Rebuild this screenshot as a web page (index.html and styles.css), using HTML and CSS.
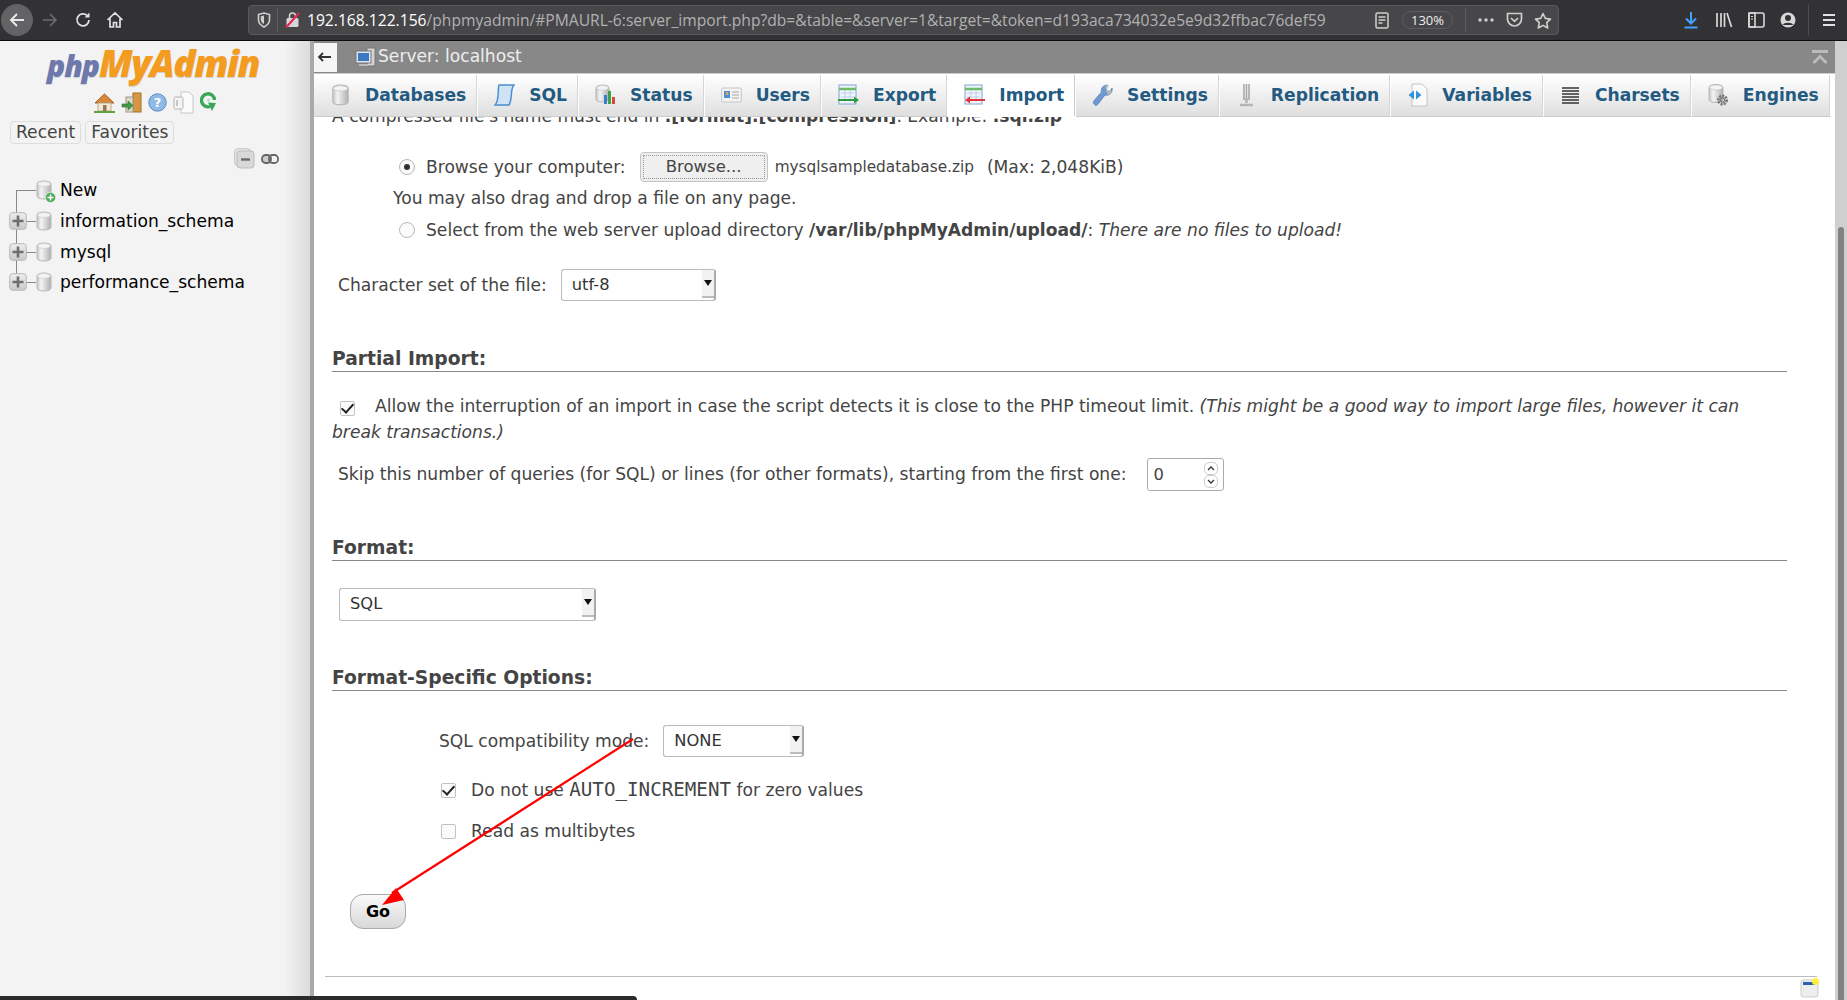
FILE: index.html
```html
<!DOCTYPE html>
<html lang="en">
<head>
<meta charset="UTF-8">
<title>phpMyAdmin - Import</title>
<link rel="stylesheet" href="styles.css">
</head>
<body>
<svg class="defs" width="0" height="0">
  <defs>
    <linearGradient id="cyl" x1="0" x2="1" y1="0" y2="0">
      <stop offset="0" stop-color="#c4c4c4"/><stop offset=".3" stop-color="#f4f4f4"/><stop offset="1" stop-color="#b0b0b0"/>
    </linearGradient>
    <linearGradient id="btn" x1="0" x2="0" y1="0" y2="1">
      <stop offset="0" stop-color="#eee"/><stop offset="1" stop-color="#c9c9c9"/>
    </linearGradient>
    <symbol id="db" viewBox="0 0 16 20">
      <path d="M1 4c0-4 14-4 14 0v12c0 4-14 4-14 0z" fill="url(#cyl)" stroke="#b8b8b8"/>
      <ellipse cx="8" cy="4" rx="6.4" ry="2.4" fill="#f4f4f4" stroke="#cacaca" stroke-width=".7"/>
    </symbol>
    <symbol id="plus" viewBox="0 0 18 18">
      <rect x=".7" y=".7" width="16.6" height="16.6" rx="3" fill="url(#btn)" stroke="#b8b8b8"/>
      <path d="M9 3.500v11M3.500 9h11" stroke="#6e6e6e" stroke-width="2.600"/>
    </symbol>
  </defs>
</svg>

<header class="browser-bar">
  <span class="nav-back">
    <svg width="18" height="18" viewBox="0 0 18 18"><path d="M16 9H3M9 3 3 9l6 6" fill="none" stroke="#e8e8e8" stroke-width="2"/></svg>
  </span>
  <svg class="ico-forward" width="18" height="18" viewBox="0 0 18 18"><path d="M2 9h13M9 3l6 6-6 6" fill="none" stroke="#6d6d6f" stroke-width="1.6"/></svg>
  <svg class="ico-reload" width="18" height="18" viewBox="0 0 18 18"><path d="M15 9a6 6 0 1 1-2-4.6" fill="none" stroke="#e2e2e2" stroke-width="1.8"/><path d="M15.5 1.5v5h-5z" fill="#e2e2e2"/></svg>
  <svg class="ico-home" width="18" height="18" viewBox="0 0 18 18"><path d="M1.5 9 9 2l7.5 7M4 7.5V16h3.5v-4.5h3V16H14V7.500" fill="none" stroke="#e2e2e2" stroke-width="1.7"/></svg>
  <div class="urlbar">
    <svg class="ico-shield" width="14" height="16" viewBox="0 0 14 16"><path d="M1.500 2.500 7 1l5.500 1.500V8c0 3-2.500 5.500-5.500 7C4 13.500 1.500 11 1.500 8z" fill="none" stroke="#cfcfcf" stroke-width="1.600"/><path d="M7 3.500v8.500C5 11 3.800 9.500 3.800 7.500V4.300z" fill="#cfcfcf"/></svg>
    <span class="url-sep"></span>
    <svg class="ico-lock" width="15" height="16" viewBox="0 0 15 16"><rect x="1.500" y="6" width="12" height="9" rx="1.500" fill="#d7d7d7"/><path d="M4.500 6V4a3 3 0 0 1 6 0v2" fill="none" stroke="#d7d7d7" stroke-width="1.500"/><path d="M1 15.500 14 1" stroke="#e22850" stroke-width="2.200"/></svg>
    <div class="url-text"><span class="url-host">192.168.122.156</span>/phpmyadmin/#PMAURL-6:server_import.php?db=&amp;table=&amp;server=1&amp;target=&amp;token=d193aca734032e5e9d32ffbac76def59</div>
    <svg class="ico-reader" width="14" height="17" viewBox="0 0 14 17"><rect x="1" y="1" width="12" height="15" rx="1.500" fill="none" stroke="#cfcfcf" stroke-width="1.500"/><path d="M3.500 5h7M3.500 8h7M3.500 11h4" stroke="#cfcfcf" stroke-width="1.300"/></svg>
    <span class="zoom-pill">130%</span>
    <span class="url-sep url-sep-right"></span>
    <svg class="ico-dots" width="16" height="4" viewBox="0 0 16 4"><circle cx="2" cy="2" r="1.700" fill="#cfcfcf"/><circle cx="8" cy="2" r="1.700" fill="#cfcfcf"/><circle cx="14" cy="2" r="1.700" fill="#cfcfcf"/></svg>
    <svg class="ico-pocket" width="17" height="16" viewBox="0 0 17 16"><path d="M1.500 1.500h14V7a7 7 0 0 1-14 0z" fill="none" stroke="#cfcfcf" stroke-width="1.700"/><path d="m5 6 3.500 3.300L12 6" fill="none" stroke="#cfcfcf" stroke-width="1.700"/></svg>
    <svg class="ico-star" width="18" height="17" viewBox="0 0 18 17"><path d="m9 1.500 2.300 4.900 5.200.7-3.800 3.600 1 5.300L9 13.400 4.300 16l1-5.300L1.500 7.100l5.200-.7z" fill="none" stroke="#cfcfcf" stroke-width="1.600" stroke-linejoin="round"/></svg>
  </div>
  <div class="browser-tools">
    <svg width="16" height="18" viewBox="0 0 16 18"><path d="M8 1v11M3 7.500 8 12.500l5-5" fill="none" stroke="#45a1ff" stroke-width="2"/><path d="M1.500 16.500h13" stroke="#45a1ff" stroke-width="2"/></svg>
    <svg class="tool-library" width="18" height="16" viewBox="0 0 18 16"><path d="M2 1v14M6 1v14M9.500 1v14M12 1l4.500 14" stroke="#d8d8d8" stroke-width="1.700" fill="none"/></svg>
    <svg width="17" height="16" viewBox="0 0 17 16"><rect x="1" y="1" width="15" height="14" rx="2" fill="none" stroke="#d8d8d8" stroke-width="1.600"/><rect x="1" y="1" width="6" height="14" fill="none" stroke="#d8d8d8" stroke-width="1.600"/><path d="M3 4.500h2M3 7h2" stroke="#d8d8d8" stroke-width="1.200"/></svg>
    <svg width="16" height="16" viewBox="0 0 16 16"><circle cx="8" cy="8" r="7.500" fill="#d8d8d8"/><circle cx="8" cy="6" r="3" fill="#323234"/><path d="M2.800 13c1-3 9.400-3 10.400 0z" fill="#323234"/></svg>
    <span class="tools-sep"></span>
    <svg width="14" height="14" viewBox="0 0 14 14"><path d="M1 2h12M1 7h12M1 12h12" stroke="#e2e2e2" stroke-width="2"/></svg>
  </div>
</header>

<div class="app">
  <aside class="sidebar">
    <div class="logo"><span class="logo-php">php</span><span class="logo-my">MyAdmin</span></div>
    <div class="nav-icons">
      <svg width="21" height="21" viewBox="0 0 21 21"><path d="M1 11 10.500 2 20 11z" fill="#d9893b" stroke="#a85f1f"/><rect x="4" y="11" width="13" height="8" fill="#f3e9d2" stroke="#b9a98a"/><rect x="9" y="13" width="3.500" height="6" fill="#8f7a55"/><path d="M0 20h21" stroke="#5fa340" stroke-width="2"/></svg>
      <svg width="21" height="21" viewBox="0 0 21 21"><rect x="12" y="1" width="8" height="19" fill="#d9953f" stroke="#a5702a"/><rect x="5" y="5" width="7" height="15" fill="#d9d9c9" stroke="#9a9a8a"/><path d="M1 12h6V9l5 4.500L7 18v-3H1z" fill="#3f9a46" stroke="#2b6d31" stroke-width=".6"/></svg>
      <svg width="19" height="21" viewBox="0 0 19 21"><circle cx="9.500" cy="10.500" r="8.700" fill="#8fb9e6" stroke="#5d8ac0"/><text class="help-q" x="9.500" y="15">?</text></svg>
      <svg width="21" height="23" viewBox="0 0 21 23"><path d="M8 1h8l4 4v17H8z" fill="#fbfbfb" stroke="#c8c8c8"/><rect x="1" y="6" width="9" height="12" rx="1.500" fill="#f4f4f4" stroke="#b5b5b5"/><path d="M4 9v6" stroke="#bbb" stroke-width="1.500"/></svg>
      <svg width="17" height="21" viewBox="0 0 17 21"><path d="M14.500 8A6.500 6.500 0 1 0 10 14.500" fill="none" stroke="#3aa65a" stroke-width="3.400"/><path d="M8 10.500l8 .5-4 8z" fill="#3aa65a"/><circle cx="8.500" cy="8" r="1.500" fill="#a8dcae"/></svg>
    </div>
    <div class="nav-tabs">
      <span class="nav-tab">Recent</span>
      <span class="nav-tab">Favorites</span>
    </div>
    <div class="nav-tools">
      <svg width="21" height="21" viewBox="0 0 21 21"><rect x=".7" y=".7" width="16" height="17" rx="3" fill="#e4e4e4" stroke="#c5c5c5"/><rect x="3" y="3" width="17" height="17" rx="3" fill="#d8d8d8" stroke="#bdbdbd"/><path d="M7 11.500h9" stroke="#6a6a6a" stroke-width="2.400"/></svg>
      <svg width="18" height="10" viewBox="0 0 18 10"><rect x="1" y="1" width="9" height="8" rx="3.500" fill="#ccc" stroke="#666" stroke-width="1.800"/><rect x="8" y="1" width="9" height="8" rx="3.500" fill="none" stroke="#666" stroke-width="1.800"/></svg>
    </div>
    <ul class="tree">
      <li class="tree-row tree-first">
        <span class="tree-exp"></span>
        <span class="tree-db tree-db-new"><svg width="16" height="20"><use href="#db"/></svg><svg class="new-dot" width="11" height="11" viewBox="0 0 11 11"><circle cx="5.500" cy="5.500" r="5" fill="#4ba858" stroke="#d9f0dc" stroke-width=".8"/><path d="M5.500 2.500v6M2.500 5.500h6" stroke="#fff" stroke-width="1.500"/></svg></span>
        <span>New</span>
      </li>
      <li class="tree-row">
        <svg class="tree-exp" width="18" height="18"><use href="#plus"/></svg>
        <span class="tree-db"><svg width="16" height="20"><use href="#db"/></svg></span>
        <span>information_schema</span>
      </li>
      <li class="tree-row">
        <svg class="tree-exp" width="18" height="18"><use href="#plus"/></svg>
        <span class="tree-db"><svg width="16" height="20"><use href="#db"/></svg></span>
        <span>mysql</span>
      </li>
      <li class="tree-row tree-last">
        <svg class="tree-exp" width="18" height="18"><use href="#plus"/></svg>
        <span class="tree-db"><svg width="16" height="20"><use href="#db"/></svg></span>
        <span>performance_schema</span>
      </li>
    </ul>
  </aside>
  <div class="resizer"></div>

  <main class="main">
    <div class="server-bar">
      <span class="server-back">
        <svg width="14" height="10" viewBox="0 0 14 10"><path d="M14 5H2M6 1 2 5l4 4" fill="none" stroke="#333" stroke-width="1.800"/></svg>
      </span>
      <svg class="server-ico" width="21" height="21" viewBox="0 0 21 21"><rect x="12" y="1" width="8" height="18" fill="#d4d4d4" stroke="#777"/><rect x="1" y="4" width="15" height="12" fill="#dfe6ee" stroke="#777"/><rect x="3" y="6" width="11" height="8" fill="#3d78c4"/><path d="M4 18h9" stroke="#bbb" stroke-width="2"/></svg>
      <span class="server-title">Server: localhost</span>
      <svg class="server-collapse" width="16" height="15" viewBox="0 0 16 15"><path d="M0 1.500h16" stroke="#bbb" stroke-width="3"/><path d="M1.500 13 8 6.500l6.500 6.500" fill="none" stroke="#bbb" stroke-width="3"/></svg>
    </div>

    <nav class="tabs">
      <a class="tab"><svg width="21" height="22" viewBox="0 0 16 20"><use href="#db"/></svg>Databases</a>
      <a class="tab"><svg width="21" height="22" viewBox="0 0 21 22"><path d="M5 1h15c-2 2-2 3-2.500 8S17 18 15 21H1c2-2 2.500-4 3-9S4 3 5 1z" fill="#cfe2f6" stroke="#4b8fd0" stroke-width="1.500"/></svg>SQL</a>
      <a class="tab"><svg width="21" height="22" viewBox="0 0 21 22"><use href="#db" width="15" height="19"/><rect x="9" y="11" width="3" height="9" fill="#3c7fc8"/><rect x="13" y="7" width="3" height="13" fill="#3fa14a"/><rect x="17" y="13" width="3" height="7" fill="#d9483b"/></svg>Status</a>
      <a class="tab"><svg width="21" height="22" viewBox="0 0 21 22"><rect x=".7" y="4" width="19.600" height="14" rx="1" fill="#f3f3f3" stroke="#c5c5c5"/><rect x="3" y="7" width="6" height="7" fill="#4a8ed6"/><rect x="4.800" y="8" width="2.500" height="3" fill="#e9a25a"/><path d="M11 8h7M11 11h7M11 14h7" stroke="#aaa" stroke-width="1.200"/></svg>Users</a>
      <a class="tab"><svg width="21" height="22" viewBox="0 0 21 22"><rect x="1" y="1" width="17" height="19" fill="#f0f5fb" stroke="#7ea5d0"/><path d="M1 5h17" stroke="#6fbb6a" stroke-width="2.500"/><path d="M3 9h13M3 13h13M7 6v12M12 6v12" stroke="#bcd0e6"/><path d="M0 15h16v-2.500l5 3.500-5 3.500V17H0z" fill="#2f9a3f"/></svg>Export</a>
      <a class="tab active"><svg width="21" height="22" viewBox="0 0 21 22"><rect x="1" y="1" width="17" height="19" fill="#f0f5fb" stroke="#7ea5d0"/><path d="M1 5h17" stroke="#6fbb6a" stroke-width="2.500"/><path d="M3 9h13M3 13h13M7 6v12M12 6v12" stroke="#bcd0e6"/><path d="M21 15H6v-2.500L1 16l5 3.500V17h15z" fill="#e5343a"/></svg>Import</a>
      <a class="tab"><svg width="21" height="24" viewBox="0 0 21 24"><path d="M2.500 21.500c-2-2-1-3.500 1-5.500l6-7c-1-3 1-7 6-7l-2 3.500 1.500 3 3.500-.5L20 5c1 5-3 8-7 7l-6.500 8.500c-1.500 2-2.500 2.500-4 1z" fill="#6d9ad6" stroke="#5f7fa8" stroke-width=".8"/><path d="M13 3c1-1 3-1 4-.5l-2 3 1.500 3 3.500-1c0 2-2 4-4.500 4.500z" fill="#b9b9b9"/></svg>Settings</a>
      <a class="tab"><svg width="21" height="24" viewBox="0 0 21 24"><path d="M8 1v16M10.500 1v16M13 1v16" stroke="#a5a5a5" stroke-width="1.500"/><path d="M9 15h3v5H9z" fill="#bbb"/><path d="M4 22h13" stroke="#b5b5b5" stroke-width="2.500"/></svg>Replication</a>
      <a class="tab"><svg width="21" height="24" viewBox="0 0 21 24"><path d="M5 1h10l5 5v17H5z" fill="#fbfbfb" stroke="#c4c4c4"/><path d="M7 7.500 1.500 12 7 16.500zM9 7.500l5.500 4.500L9 16.500z" fill="#2f93e0"/></svg>Variables</a>
      <a class="tab"><svg width="21" height="22" viewBox="0 0 21 22"><path d="M2 4h17M2 7h17M2 10h17M2 13h17M2 16h17M2 19h17" stroke="#333" stroke-width="1.500"/></svg>Charsets</a>
      <a class="tab"><svg width="21" height="24" viewBox="0 0 21 24"><use href="#db" width="16" height="21"/><circle cx="14.500" cy="17" r="4" fill="none" stroke="#777" stroke-width="3" stroke-dasharray="2 1"/><circle cx="14.500" cy="17" r="2" fill="none" stroke="#666"/></svg>Engines</a>
    </nav>

    <section class="content">
      <p class="clipped">A compressed file's name must end in <b>.[format].[compression]</b>. Example: <b>.sql.zip</b></p>

      <div class="row browse-row">
        <span class="radio on"></span>
        <span class="row-label">Browse your computer:</span>
        <button class="browse-btn"><span>Browse...</span></button>
        <span class="file-name">mysqlsampledatabase.zip</span>
        <span class="file-max">(Max: 2,048KiB)</span>
      </div>
      <p class="drag-note">You may also drag and drop a file on any page.</p>
      <div class="row select-row">
        <span class="radio"></span>
        <span class="row-label">Select from the web server upload directory <b>/var/lib/phpMyAdmin/upload/</b>: <i>There are no files to upload!</i></span>
      </div>

      <div class="row charset-row">
        <span>Character set of the file:</span>
        <div class="select select-charset"><span class="select-val">utf-8</span><span class="select-btn"></span></div>
      </div>

      <h3 class="section-head head-partial">Partial Import:</h3>
      <p class="allow-text"><span class="check on"></span><span class="allow-label">Allow the interruption of an import in case the script detects it is close to the PHP timeout limit.</span> <i>(This might be a good way to import large files, however it can break transactions.)</i></p>
      <div class="row skip-row">
        <span class="skip-label">Skip this number of queries (for SQL) or lines (for other formats), starting from the first one:</span>
        <div class="number"><span>0</span>
          <span class="spin">
            <svg width="14" height="13" viewBox="0 0 14 13"><rect x=".5" y=".5" width="13" height="12" rx="4.500" fill="#fff" stroke="#ccc"/><path d="M4 8l3-3 3 3" fill="none" stroke="#333" stroke-width="1.300"/></svg>
            <svg width="14" height="13" viewBox="0 0 14 13"><rect x=".5" y=".5" width="13" height="12" rx="4.500" fill="#fff" stroke="#ccc"/><path d="M4 5l3 3 3-3" fill="none" stroke="#333" stroke-width="1.300"/></svg>
          </span>
        </div>
      </div>

      <h3 class="section-head head-format">Format:</h3>
      <div class="select select-format"><span class="select-val">SQL</span><span class="select-btn"></span></div>

      <h3 class="section-head head-options">Format-Specific Options:</h3>
      <div class="options">
        <div class="row compat-row">
          <span>SQL compatibility mode:</span>
          <div class="select select-compat"><span class="select-val">NONE</span><span class="select-btn"></span></div>
        </div>
        <div class="row opt-row opt-auto"><span class="check on"></span><span>Do not use <code>AUTO_INCREMENT</code> for zero values</span></div>
        <div class="row opt-row opt-multi"><span class="check"></span><span>Read as multibytes</span></div>
      </div>

      <button class="go-btn">Go</button>
      <hr class="foot-rule">
    </section>
  </main>

  <div class="scrollbar"><div class="scroll-thumb"></div></div>
</div>

<svg class="console-ico" width="20" height="20" viewBox="0 0 20 20"><rect x="1" y="2" width="17" height="17" rx="2" fill="#eee" stroke="#ccc"/><rect x="3" y="4" width="13" height="3" fill="#2a62ad"/><circle cx="15.500" cy="3.500" r="3.500" fill="#ffef3a"/></svg>
<div class="taskbar"></div>
<svg class="annot-arrow" width="1847" height="1000" viewBox="0 0 1847 1000">
  <path d="M633 739 392 893" stroke="#f00" stroke-width="2.200" fill="none"/>
  <path d="M382 905 396 888 404 900z" fill="#f00"/>
</svg>
</body>
</html>
```

FILE: styles.css
```css
* {
    box-sizing: border-box;
}
html, body {
    height: 100%;
}
body {
    margin: 0;
    position: relative;
    overflow: hidden;
    font-family: "DejaVu Sans", sans-serif;
    font-size: 17.120px;
    color: #444;
    background: #fff;
}
.defs {
    position: absolute;
}
p, h3, ul {
    margin: 0;
    padding: 0;
}

/* browser toolbar */
.browser-bar {
    height: 41px;
    background: #323234;
    border-bottom: 1px solid #0c0c0d;
    display: flex;
    align-items: center;
    padding-left: 1px;
}
.nav-back {
    width: 32px;
    height: 32px;
    border-radius: 50%;
    background: #636365;
    display: flex;
    align-items: center;
    justify-content: center;
}
.ico-forward {
    margin-left: 8px;
}
.ico-reload {
    margin-left: 15px;
}
.ico-home {
    margin-left: 14px;
}
.urlbar {
    width: 1311px;
    height: 30px;
    margin-left: 124px;
    background: #474749;
    border: 1px solid #5a5a5c;
    border-radius: 4px;
    display: flex;
    align-items: center;
    padding-left: 8px;
    color: #b1b1b3;
}
.url-sep {
    width: 1px;
    height: 24px;
    background: #5e5e60;
    margin-left: 6px;
}
.ico-lock {
    margin-left: 7px;
}
.url-text {
    width: 1052px;
    margin-left: 7px;
    font-family: "Open Sans", sans-serif;
    font-size: 15.640px;
    white-space: nowrap;
}
.url-host {
    color: #fff;
}
.ico-reader {
    margin-left: 16px;
}
.zoom-pill {
    width: 51px;
    height: 18px;
    margin-left: 13px;
    border: 1px solid #5c5c5e;
    border-radius: 9px;
    color: #eee;
    font-family: "Open Sans", sans-serif;
    font-size: 13px;
    line-height: 16px;
    text-align: center;
}
.url-sep-right {
    margin-left: 12px;
}
.ico-dots {
    margin-left: 12px;
}
.ico-pocket {
    margin-left: 12px;
}
.ico-star {
    margin-left: 11px;
}
.browser-tools {
    display: flex;
    align-items: center;
    gap: 15px;
    margin-left: 124px;
}
.tool-library {
    margin-left: 1px;
}
.tools-sep {
    width: 1px;
    height: 32px;
    background: #4c4c4e;
    margin: 0 -2px 0 -3px;
}

/* app layout */
.app {
    display: flex;
    height: calc(100% - 41px);
}
.sidebar {
    width: 310px;
    flex-shrink: 0;
    background: linear-gradient(to right, #f3f3f3 92%, #dcdcdc);
    color: #000;
}
.resizer {
    width: 4px;
    background: #a9a9a9;
}
.main {
    width: 1521px;
    display: flex;
    flex-direction: column;
}
.scrollbar {
    flex: 1;
    background: #cfcfcf;
    padding: 186px 3px 0;
}
.scroll-thumb {
    height: 100%;
    background: #7f8285;
    border-radius: 3px 3px 0 0;
}

/* left navigation */
.logo {
    margin-top: 2px;
    height: 40px;
    padding-left: 47px;
    font-family: "Open Sans", sans-serif;
    font-style: italic;
    font-weight: 800;
    line-height: 40px;
    white-space: nowrap;
    text-shadow: 0 1px 1px rgba(0, 0, 0, 0.15);
}
.logo-php {
    color: #6d78ad;
    font-size: 30px;
    letter-spacing: -1px;
}
.logo-my {
    color: #f39c1f;
    font-size: 37px;
    letter-spacing: -1.500px;
}
.nav-icons {
    display: flex;
    align-items: center;
    gap: 6px;
    padding-left: 94px;
    margin-top: 8px;
    height: 23px;
}
.help-q {
    font-size: 13px;
    font-weight: 700;
    fill: #fff;
    text-anchor: middle;
}
.nav-tabs {
    display: flex;
    gap: 4px;
    padding-left: 10px;
    margin-top: 7px;
}
.nav-tab {
    height: 23px;
    padding: 0 5px;
    border: 1px solid #ddd;
    border-radius: 4px;
    line-height: 21px;
    color: #444;
}
.nav-tools {
    display: flex;
    align-items: center;
    gap: 6px;
    padding-left: 234px;
    margin-top: 4px;
    height: 21px;
}
.tree {
    list-style: none;
    margin-top: 6px;
}
.tree-row {
    position: relative;
    display: flex;
    align-items: center;
    height: 30.700px;
    padding-left: 9px;
}
.tree-exp {
    width: 18px;
    height: 18px;
    position: relative;
    z-index: 1;
}
.tree-db {
    position: relative;
    width: 16px;
    height: 20px;
    margin: 0 8px 0 9px;
}
.new-dot {
    position: absolute;
    right: -4px;
    bottom: -3px;
}
/* tree connector lines */
.tree-row::before {
    content: "";
    position: absolute;
    left: 16px;
    top: 0;
    bottom: 0;
    border-left: 1px solid #888;
}
.tree-row::after {
    content: "";
    position: absolute;
    left: 16px;
    width: 20px;
    top: 50%;
    border-top: 1px solid #888;
}
.tree-first::before {
    top: 50%;
}
.tree-last::before {
    bottom: 50%;
}

/* server bar and tabs */
.server-bar {
    height: 32px;
    flex-shrink: 0;
    background: #888;
    display: flex;
    align-items: center;
    color: #eee;
}
.server-back {
    width: 23px;
    height: 29px;
    padding-right: 4px;
    background: #f5f5f5;
    display: flex;
    align-items: center;
    justify-content: center;
}
.server-ico {
    margin-left: 18px;
}
.server-title {
    margin-left: 2px;
    padding-bottom: 2px;
}
.server-collapse {
    margin-left: auto;
    margin-right: 7px;
}
.tabs {
    display: flex;
    height: 44px;
    flex-shrink: 0;
    padding-top: 1px;
    position: relative;
    z-index: 1;
    background: #fff;
    border-top: 1px solid #ccc;
}
.tab {
    display: flex;
    align-items: center;
    gap: 14px;
    padding: 0 11px 2px 16px;
    height: 42px;
    background: linear-gradient(#fff, #dfdfdf);
    border-right: 1px solid #fff;
    border-bottom: 1px solid #ccc;
    box-shadow: inset -1px 0 0 #d5d5d5;
    color: #235a81;
    font-weight: 700;
}
.tab.active {
    background: #fff;
    border-bottom-color: #fff;
    box-shadow: inset -1px 0 0 #ccc;
}

/* form content */
.content {
    flex: 1;
    overflow: hidden;
    padding-left: 18px;
    padding-right: 48px;
    line-height: 24px;
}
.row {
    display: flex;
    align-items: center;
}
.clipped {
    margin-top: -13px;
    white-space: nowrap;
}
.browse-row {
    height: 30px;
    margin-top: 24px;
    padding-left: 67px;
}
.radio {
    width: 16px;
    height: 16px;
    flex-shrink: 0;
    border-radius: 50%;
    border: 1px solid #b8b8b8;
    background: #fbfbfb;
    display: flex;
    align-items: center;
    justify-content: center;
}
.radio.on::after {
    content: "";
    width: 6px;
    height: 6px;
    border-radius: 50%;
    background: #333;
}
.row-label {
    margin-left: 11px;
}
.browse-btn {
    width: 128px;
    height: 30px;
    margin-left: 14px;
    padding: 2px;
    border: 1px solid #c4c4c4;
    border-radius: 4px;
    background: #efefef;
    font: inherit;
    font-size: 16.500px;
    color: #444;
}
.browse-btn span {
    display: block;
    height: 24px;
    line-height: 22px;
    border: 1px dotted #999;
}
.file-name {
    margin-left: 7px;
    font-size: 15.300px;
}
.file-max {
    margin-left: 13px;
}
.drag-note {
    margin-top: 4px;
    padding-left: 61px;
}
.select-row {
    margin-top: 8px;
    padding-left: 67px;
    height: 24px;
}
.charset-row {
    margin-top: 27px;
    padding-left: 6px;
    gap: 14px;
    height: 32px;
}
.select {
    display: flex;
    height: 32px;
    border: 1px solid #bbb;
    border-right: 2px solid #aaa;
    border-radius: 3px;
    color: #333;
    background: #fff;
    font-size: 16.300px;
}
.select-val {
    flex: 1;
    padding-left: 10px;
    line-height: 30px;
}
.select-btn {
    width: 12px;
    height: 28px;
    background: #f2f2f2;
    border-bottom: 2px solid #bbb;
    display: flex;
    align-items: center;
    justify-content: center;
}
.select-btn::after {
    content: "";
    border-left: 4px solid transparent;
    border-right: 4px solid transparent;
    border-top: 6px solid #111;
}
.select-charset {
    width: 155px;
}
.select-format {
    width: 257px;
    height: 33px;
    margin: 27px 0 0 7px;
}
.select-compat {
    width: 141px;
}
.section-head {
    height: 28px;
    font-size: 18.700px;
    line-height: 29px;
    border-bottom: 1px solid #888;
}
.head-partial {
    margin-top: 43px;
}
.allow-text {
    margin-top: 21px;
    line-height: 26px;
}
.check {
    display: inline-flex;
    align-items: center;
    justify-content: center;
    width: 15px;
    height: 15px;
    border: 1px solid #c2c2c2;
    border-radius: 2px;
    background: #fbfbfb;
    font-size: 14px;
    line-height: 1;
    color: #222;
    vertical-align: -2px;
}
.check.on::after {
    content: "";
    width: 5px;
    height: 10px;
    border: solid #222;
    border-width: 0 2.500px 2.500px 0;
    transform: translateY(-1px) rotate(42deg);
}
.allow-text .check {
    margin-left: 8px;
}
.allow-label {
    margin-left: 20px;
}
.skip-row {
    margin-top: 13px;
    padding-left: 6px;
    gap: 20px;
    height: 33px;
}
.skip-label {
    padding-bottom: 2px;
}
.number {
    width: 77px;
    height: 33px;
    border: 1px solid #aaa;
    border-radius: 3px;
    display: flex;
    align-items: center;
    justify-content: space-between;
    padding: 0 5px 0 6px;
    font-size: 16.300px;
    color: #444;
}
.spin {
    display: flex;
    flex-direction: column;
}
.head-format {
    margin-top: 42px;
}
.head-options {
    margin-top: 42px;
}
.options {
    padding-left: 107px;
}
.compat-row {
    margin-top: 34px;
    gap: 14px;
    height: 32px;
}
.opt-row {
    gap: 15px;
    height: 24px;
    padding-left: 2px;
}
.opt-auto {
    margin-top: 21px;
}
.opt-multi {
    margin-top: 17px;
}
code {
    font-family: "DejaVu Sans Mono", monospace;
    font-size: 19.200px;
}
.go-btn {
    display: block;
    width: 56px;
    height: 35px;
    margin: 51px 0 0 18px;
    border: 1px solid #aaa;
    border-radius: 13px;
    background: linear-gradient(#fafafa, #d8d8d8);
    font: inherit;
    font-size: 16px;
    font-weight: 700;
    color: #000;
}
.foot-rule {
    border: 0;
    border-top: 1px solid #bbb;
    margin: 47px -30px 0 -7px;
}

/* things lying over the page */
.console-ico {
    position: absolute;
    left: 1800px;
    top: 978px;
}
.taskbar {
    position: absolute;
    left: 0;
    bottom: 0;
    width: 637px;
    height: 4px;
    background: #2b2b2b;
    border-radius: 0 5px 0 0;
}
.annot-arrow {
    position: absolute;
    left: 0;
    top: 0;
    pointer-events: none;
}
```
